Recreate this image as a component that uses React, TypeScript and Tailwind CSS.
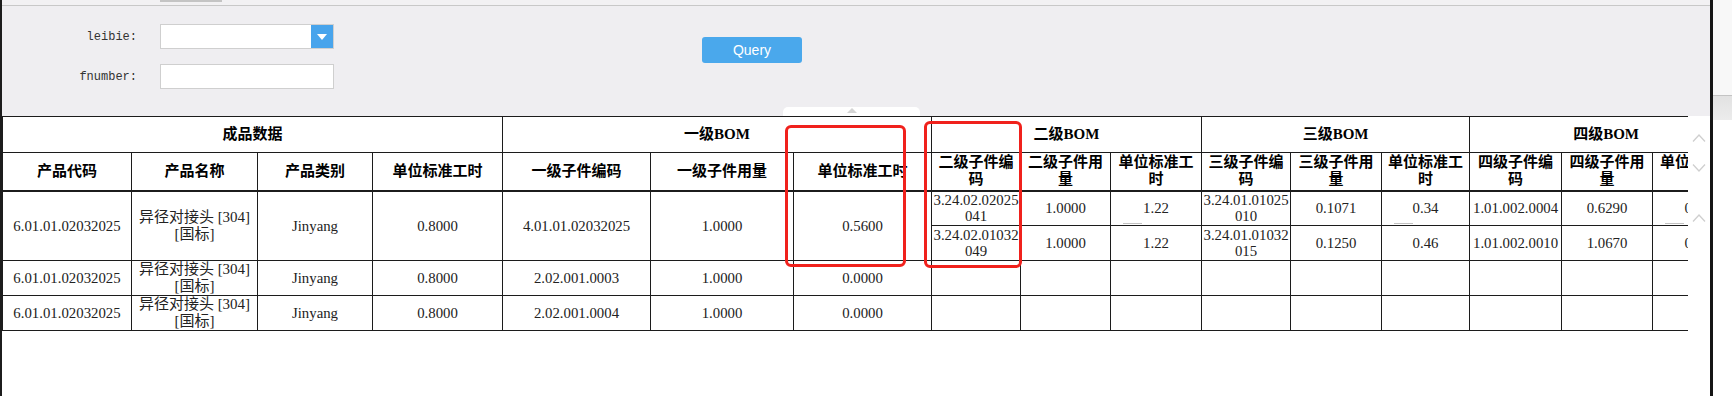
import React from "react";

const COLS = [129, 126, 115, 130, 148, 143, 138, 89, 90, 91, 89, 91, 88, 92, 91, 90];

const LEVEL_HEADS = [
  "二级子件编码", "二级子件用量", "单位标准工时",
  "三级子件编码", "三级子件用量", "单位标准工时",
  "四级子件编码", "四级子件用量", "单位标准工时",
];

const SUB_ROWS = [
  ["3.24.02.02025041", "1.0000", "1.22", "3.24.01.01025010", "0.1071", "0.34", "1.01.002.0004", "0.6290", "0.12"],
  ["3.24.02.01032049", "1.0000", "1.22", "3.24.01.01032015", "0.1250", "0.46", "1.01.002.0010", "1.0670", "0.15"],
];

const MAIN_ROWS = [
  ["4.01.01.02032025", "1.0000", "0.5600"],
  ["2.02.001.0003", "1.0000", "0.0000"],
  ["2.02.001.0004", "1.0000", "0.0000"],
];

const cell = "border border-[#1c1c1c] p-0 text-center align-middle";
const head = `${cell} font-bold text-black px-[2px] leading-[17px]`;
const data = `${cell} text-[#222] text-[14.8px] leading-[16px] break-all`;

function Chevron({ up }: { up?: boolean }) {
  return (
    <svg width="14" height="10" viewBox="0 0 14 10" className="block">
      <polyline
        points={up ? "1,8.5 7,2 13,8.5" : "1,1.5 7,8 13,1.5"}
        fill="none"
        stroke="#cfcfcf"
        strokeWidth="1.3"
      />
    </svg>
  );
}

function ProductCells() {
  return (
    <>
      <td className={data}>6.01.01.02032025</td>
      <td className={`${cell} text-[#222] text-[15px] leading-[17px]`}>异径对接头 [304] [国标]</td>
      <td className={data}>Jinyang</td>
      <td className={data}>0.8000</td>
    </>
  );
}

export default function App() {
  return (
    <div
      className="flex w-[1732px] h-[396px] overflow-hidden bg-white"
      style={{ fontFamily: '"Liberation Serif", "Noto Sans CJK SC", serif' }}
    >
      {/* main page */}
      <div className="w-[1710px] flex flex-col border-l-2 border-[#1c1c1c]">
        {/* top strip */}
        <div className="h-[6px] bg-[#f2f1f3] border-b border-[#c8c8c8] relative">
          <div className="absolute left-[158px] top-0 w-[62px] h-[2px] bg-[#c4c4c4]" />
        </div>

        {/* filter panel */}
        <div className="h-[110px] bg-[#efeef1] flex items-start relative">
          <div className="flex flex-col gap-[15px] pt-[18px]">
            <div className="flex items-center">
              <span
                className="w-[135px] text-right text-[12px] text-[#333]"
                style={{ fontFamily: '"Liberation Mono", monospace' }}
              >
                leibie:
              </span>
              <div className="ml-[23px] w-[174px] h-[25px] flex bg-white border border-[#cfcfcf]">
                <div className="flex-1" />
                <div className="w-[22px] bg-[#48a4ec] flex items-center justify-center">
                  <svg width="10" height="6" viewBox="0 0 10 6">
                    <polygon points="0,0 10,0 5,6" fill="#fff" />
                  </svg>
                </div>
              </div>
            </div>
            <div className="flex items-center">
              <span
                className="w-[135px] text-right text-[12px] text-[#333]"
                style={{ fontFamily: '"Liberation Mono", monospace' }}
              >
                fnumber:
              </span>
              <div className="ml-[23px] w-[174px] h-[25px] bg-white border border-[#cfcfcf]" />
            </div>
          </div>
          <button
            className="ml-[368px] mt-[31px] w-[100px] h-[26px] rounded-[3px] bg-[#4aa8ec] text-white text-[14px]"
            style={{ fontFamily: '"Liberation Sans", Arial, sans-serif' }}
          >
            Query
          </button>
          {/* faint popover tab under the button */}
          <div className="absolute left-[781px] bottom-0 w-[137px] h-[9px] bg-white rounded-t-[5px] flex justify-center">
            <div className="mt-[1px] w-0 h-0 border-l-[5px] border-r-[5px] border-b-[5px] border-l-transparent border-r-transparent border-b-[#d4d4d4]" />
          </div>
        </div>

        {/* table area */}
        <div className="flex-1 flex relative">
          <div className="w-[1686px] overflow-hidden">
            <table className="table-fixed border-collapse w-[1740px] text-[15px]">
              <colgroup>
                {COLS.map((w, i) => (
                  <col key={i} style={{ width: w }} />
                ))}
              </colgroup>
              <thead>
                <tr className="h-[36px]">
                  <th colSpan={4} className={head}>成品数据</th>
                  <th colSpan={3} className={head}>一级BOM</th>
                  <th colSpan={3} className={head}>二级BOM</th>
                  <th colSpan={3} className={head}>三级BOM</th>
                  <th colSpan={3} className={head}>四级BOM</th>
                </tr>
                <tr className="h-[38px] border-b-2 border-[#1c1c1c]">
                  {["产品代码", "产品名称", "产品类别", "单位标准工时", "一级子件编码", "一级子件用量", "单位标准工时"].map((t, i) => (
                    <th key={i} className={head}>{t}</th>
                  ))}
                  {LEVEL_HEADS.map((t, i) => (
                    <th key={i} className={head}>{t}</th>
                  ))}
                </tr>
              </thead>
              <tbody>
                {SUB_ROWS.map((sub, si) => (
                  <tr key={si} className="h-[35px]">
                    {si === 0 && (
                      <>
                        <td rowSpan={2} className={data}>6.01.01.02032025</td>
                        <td rowSpan={2} className={`${cell} text-[#222] text-[15px] leading-[17px]`}>
                          异径对接头 [304] [国标]
                        </td>
                        <td rowSpan={2} className={data}>Jinyang</td>
                        <td rowSpan={2} className={data}>0.8000</td>
                        {MAIN_ROWS[0].map((v, i) => (
                          <td key={i} rowSpan={2} className={data}>{v}</td>
                        ))}
                      </>
                    )}
                    {sub.map((v, i) => (
                      <td key={i} className={`${data} relative`}>
                        {v}
                        {si === 0 && (i === 2 || i === 5 || i === 8) && (
                          <span className="absolute left-[12px] bottom-[1px] w-[19px] h-[1px] bg-[#c2c2c2]" />
                        )}
                      </td>
                    ))}
                  </tr>
                ))}
                {MAIN_ROWS.slice(1).map((r, ri) => (
                  <tr key={ri} className={ri === 0 ? "h-[35px]" : "h-[34px]"}>
                    <ProductCells />
                    {r.map((v, i) => (
                      <td key={i} className={data}>{v}</td>
                    ))}
                    {LEVEL_HEADS.map((_, i) => (
                      <td key={i} className={data} />
                    ))}
                  </tr>
                ))}
              </tbody>
            </table>
          </div>

          {/* side scroll arrows */}
          <div className="w-[21px] flex flex-col items-center pl-[1px]">
            <div className="mt-[17px]"><Chevron up /></div>
            <div className="mt-[20px]"><Chevron /></div>
            <div className="mt-[40px]"><Chevron up /></div>
          </div>

          {/* highlight boxes */}
          <div className="absolute left-[783px] top-[9px] w-[121px] h-[142px] border-[3px] border-[#f0211c] rounded-[6px]" />
          <div className="absolute left-[922px] top-[5px] w-[98px] h-[147px] border-[3px] border-[#f0211c] rounded-[6px]" />
        </div>
      </div>

      {/* window edge */}
      <div className="w-[3px] bg-[#151515]" />

      {/* neighbouring window */}
      <div className="flex-1 flex flex-col">
        <div className="h-[96px] bg-[#f8f8f8] border-b border-[#c4c4c4]" />
        <div className="h-[24px] bg-gradient-to-b from-[#e2e2e2] to-[#ececec]" />
        <div className="flex-1 bg-white" />
      </div>
    </div>
  );
}
